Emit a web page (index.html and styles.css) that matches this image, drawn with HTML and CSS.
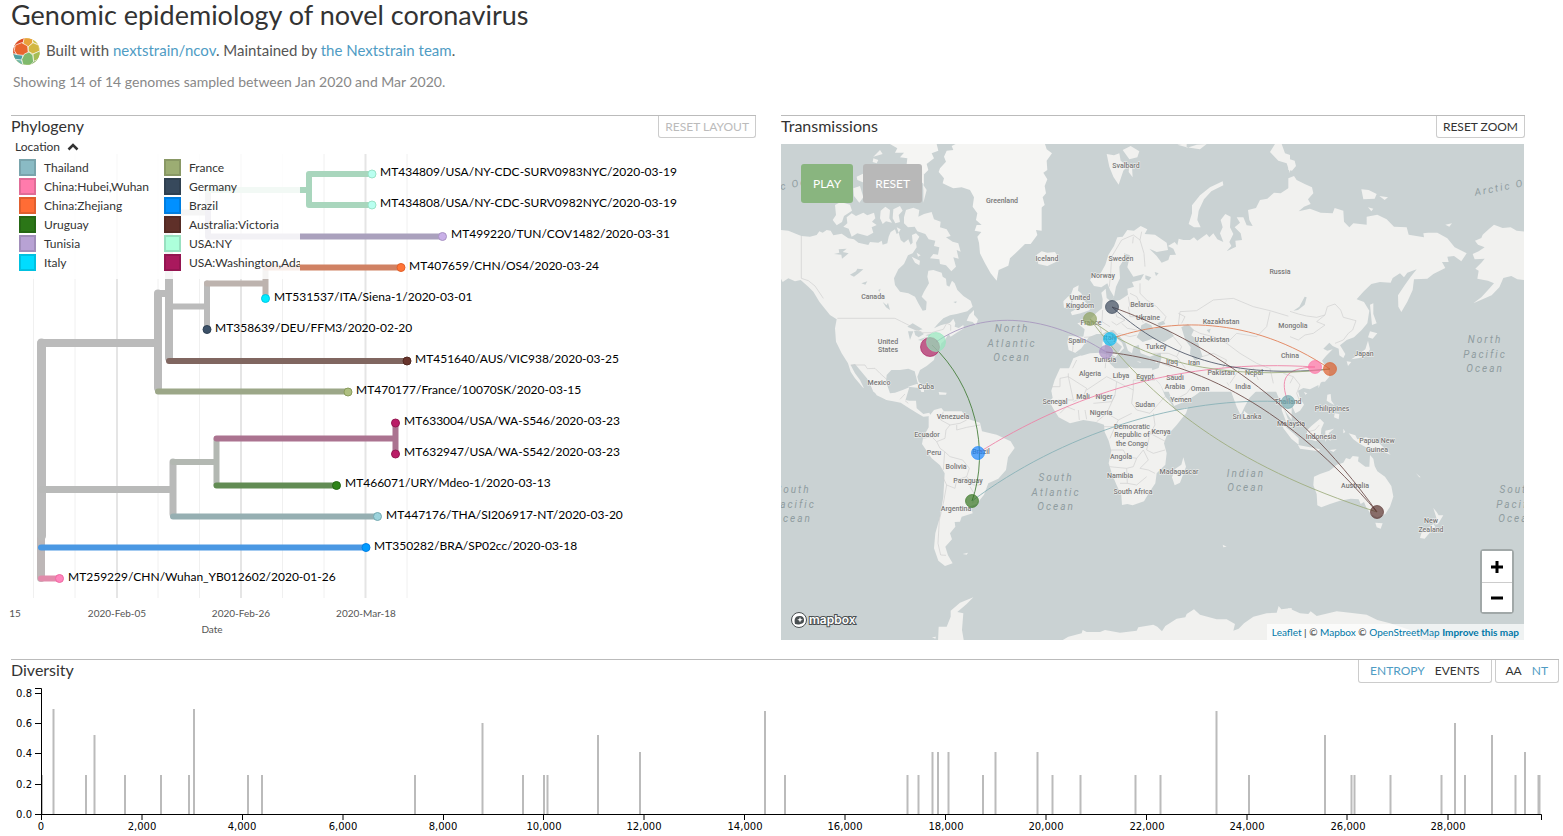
FILE: index.html
```html
<!DOCTYPE html>
<html lang="en">
<head>
<meta charset="utf-8">
<title>Genomic epidemiology of novel coronavirus</title>
<link rel="stylesheet" href="styles.css">
</head>
<body>
<header class="header">
  <h1 class="title">Genomic epidemiology of novel coronavirus</h1>
  <div class="byline">
    <svg class="logo" viewBox="0 0 81 81" aria-hidden="true">
      <clipPath id="disc"><circle cx="40.500" cy="40.500" r="40"/></clipPath>
      <g clip-path="url(#disc)" stroke="#fff" stroke-width="2">
        <rect width="81" height="81" fill="#d9c04a"/>
        <path fill="#e04a2a" d="M0 0h36l-6 14-14 8-16 6z"/>
        <path fill="#e8a23a" d="M34 -2h26l-2 18-14 12-14-12z"/>
        <path fill="#c8bd45" d="M58 0h24v22l-8-2-14-6z"/>
        <path fill="#e8662e" d="M6 22l20-8 18 10 2 20-14 10-20-2-10-14z"/>
        <path fill="#d2b742" d="M46 26l14-12 18 8 2 18-20 8-14-8z"/>
        <path fill="#df5335" d="M-2 28l8-4-2 14 6 10-14 2z"/>
        <path fill="#4f9fa3" d="M-2 46l14 4 18 2-4 16-16-2-12-4z"/>
        <path fill="#71b7a6" d="M8 64l18 2 4 16-24 2z"/>
        <path fill="#7fba6c" d="M34 48l14-6 12 10 2 22-14 10-18-4-4-16z"/>
        <path fill="#a5bd55" d="M60 48l18-8 6 6-4 20-18 6z"/>
        <path fill="#73a45a" d="M62 70l14-6v20H52z"/>
      </g>
    </svg>
    <span class="byline-text">Built with <a href="#ncov">nextstrain/ncov</a>. Maintained by <a href="#team">the Nextstrain team</a>.</span>
  </div>
  <p class="summary">Showing 14 of 14 genomes sampled between Jan 2020 and Mar 2020.</p>
</header>

<main>
  <div class="panels">
    <section class="panel">
      <div class="panel-head">
        <h2 class="panel-title">Phylogeny</h2>
        <button class="tab" type="button" disabled>RESET LAYOUT</button>
      </div>
      <div class="tree-wrap">
        <svg class="tree" viewBox="9 140 747 504" role="img" aria-label="Phylogenetic tree">
          <g class="grid-minor"><path d="M33.500 154V598M75 154V598M158 154V598M199.500 154V598M282.500 154V598M324 154V598M407 154V598"/></g>
          <g class="grid-major"><path d="M117 154V598M241 154V598M365.500 154V598"/></g>
          <g class="branches">
            <path stroke="#bdb7b7" stroke-width="8" d="M41 480V578"/>
            <path stroke="#bbb" stroke-width="9" d="M41.500 343V536"/>
            <path stroke="#bbb" stroke-width="8" d="M41.500 343H158"/>
            <path stroke="#bbb" stroke-width="8" d="M158 293.500V388"/>
            <path stroke="#bbb" stroke-width="7" d="M158 293.500H169"/>
            <path stroke="#bbb" stroke-width="8" d="M169 212V358"/>
            <path stroke="#bbb" stroke-width="6" d="M169 306.500H207V326M169 212.500H208V190"/>
            <path stroke="#bbb" stroke-width="6" d="M207 306.500V283.500"/>
            <path stroke="#bdb3ae" stroke-width="6" d="M207 283.500H265.500M265.500 267V295"/>
            <path stroke="#d08163" stroke-width="6" d="M265.500 267.500H401"/>
            <path stroke="#aaa1bd" stroke-width="6" d="M208 212V236.500H442"/>
            <path stroke="#a9d6bd" stroke-width="6" d="M208 190H309M309 174V205M309 174H372M309 205H372"/>
            <path stroke="#806660" stroke-width="6" d="M169 361H407"/>
            <path stroke="#9ca788" stroke-width="6" d="M158 391.500H348"/>
            <path stroke="#b9bab9" stroke-width="7" d="M41.500 489.500H173M173 462V514"/>
            <path stroke="#b3b8b2" stroke-width="6" d="M173 462H216.500M216.500 440V484"/>
            <path stroke="#ab7390" stroke-width="6" d="M216.500 438.500H395.500M395.500 423V454"/>
            <path stroke="#628c54" stroke-width="6" d="M216.500 485.500H336"/>
            <path stroke="#96afb2" stroke-width="6" d="M173 516.500H377"/>
            <path stroke="#4a98e3" stroke-width="6" d="M41 547.500H366"/>
            <path stroke="#e28bab" stroke-width="6" d="M41 578.500H59"/>
          </g>
          <g class="tips">
            <circle cx="372" cy="174" r="4" fill="#b9fff0" stroke="#9be3c8"/>
            <circle cx="372" cy="205" r="4" fill="#b9fff0" stroke="#9be3c8"/>
            <circle cx="442.500" cy="236.500" r="4" fill="#c9b0e8" stroke="#a994c4"/>
            <circle cx="401" cy="267.500" r="4" fill="#ff7436" stroke="#e2602a"/>
            <circle cx="265.500" cy="298.500" r="4" fill="#00edff" stroke="#00c5e6"/>
            <circle cx="207" cy="329.500" r="4" fill="#3c5168" stroke="#2f4154"/>
            <circle cx="407" cy="361" r="4" fill="#69352d" stroke="#522821"/>
            <circle cx="348" cy="392" r="4" fill="#aebf80" stroke="#8a9c5d"/>
            <circle cx="395.500" cy="423" r="4" fill="#bb1c67" stroke="#951852"/>
            <circle cx="395.500" cy="454" r="4" fill="#bb1c67" stroke="#951852"/>
            <circle cx="336.500" cy="485.500" r="4" fill="#2f8419" stroke="#246713"/>
            <circle cx="377.500" cy="516.500" r="4" fill="#9cd3dc" stroke="#74a9b1"/>
            <circle cx="366" cy="547.500" r="4" fill="#009bff" stroke="#0080e6"/>
            <circle cx="59.500" cy="578.500" r="4" fill="#ff85bd" stroke="#f069a2"/>
          </g>
          <g class="tip-label">
            <text x="380" y="176">MT434809/USA/NY-CDC-SURV0983NYC/2020-03-19</text>
            <text x="380" y="207">MT434808/USA/NY-CDC-SURV0982NYC/2020-03-19</text>
            <text x="451" y="238">MT499220/TUN/COV1482/2020-03-31</text>
            <text x="409" y="270">MT407659/CHN/OS4/2020-03-24</text>
            <text x="274" y="301">MT531537/ITA/Siena-1/2020-03-01</text>
            <text x="215" y="332">MT358639/DEU/FFM3/2020-02-20</text>
            <text x="415" y="363">MT451640/AUS/VIC938/2020-03-25</text>
            <text x="356" y="394">MT470177/France/10070SK/2020-03-15</text>
            <text x="404" y="425">MT633004/USA/WA-S546/2020-03-23</text>
            <text x="404" y="456">MT632947/USA/WA-S542/2020-03-23</text>
            <text x="345" y="487">MT466071/URY/Mdeo-1/2020-03-13</text>
            <text x="386" y="519">MT447176/THA/SI206917-NT/2020-03-20</text>
            <text x="374" y="550">MT350282/BRA/SP02cc/2020-03-18</text>
            <text x="68" y="581">MT259229/CHN/Wuhan_YB012602/2020-01-26</text>
          </g>
          <g class="date-label">
            <text x="15" y="617">15</text><text x="117" y="617">2020-Feb-05</text>
            <text x="241" y="617">2020-Feb-26</text><text x="366" y="617">2020-Mar-18</text>
            <text x="212" y="633">Date</text>
          </g>
        </svg>
        <div class="legend">
          <button class="legend-toggle" type="button">Location
            <svg class="chevron" viewBox="0 0 12 8" aria-hidden="true"><path d="M1.500 6.500L6 2l4.500 4.500" fill="none" stroke="#333" stroke-width="2.500"/></svg>
          </button>
          <ul class="legend-list">
            <li><i class="sw thailand"></i>Thailand</li>
            <li><i class="sw hubei"></i>China:Hubei,Wuhan</li>
            <li><i class="sw zhejiang"></i>China:Zhejiang</li>
            <li><i class="sw uruguay"></i>Uruguay</li>
            <li><i class="sw tunisia"></i>Tunisia</li>
            <li><i class="sw italy"></i>Italy</li>
            <li><i class="sw france"></i>France</li>
            <li><i class="sw germany"></i>Germany</li>
            <li><i class="sw brazil"></i>Brazil</li>
            <li><i class="sw victoria"></i>Australia:Victoria</li>
            <li><i class="sw ny"></i>USA:NY</li>
            <li><i class="sw washington"></i>USA:Washington,Ada</li>
          </ul>
        </div>
      </div>
    </section>

    <section class="panel">
      <div class="panel-head">
        <h2 class="panel-title">Transmissions</h2>
        <button class="tab" type="button">RESET ZOOM</button>
      </div>
      <div class="map-wrap">
        <svg class="map" viewBox="781 144 743 496" role="img" aria-label="World map of transmissions">
          <rect x="781" y="144" width="743" height="496" fill="#cad2d3"/>
          <!-- North America, Greenland -->
          <g transform="translate(780 110) scale(.33333)">
            <path class="land" d="M0 360L25 362 64 378 90 380 110 375 118 364 128 368 140 360 152 362 160 376 185 371 205 385 222 388 235 398 265 405 270 396 295 398 305 392 308 404 322 400 326 380 332 366 345 358 350 372 356 368 362 390 372 398 385 388 392 404 398 398 396 375 408 370 418 380 408 398 410 412 398 430 384 436 372 462 355 478 342 505 345 525 360 545 385 550 405 560 415 580 428 602 438 600 440 575 425 560 432 545 447 520 442 500 445 482 460 480 485 488 488 500 498 506 500 526 508 530 516 512 524 520 532 540 550 558 572 572 578 590 562 604 530 612 510 616 490 625 475 640 462 655 482 646 510 638 520 626 526 640 524 650 536 654 550 645 552 655 530 668 512 680 505 672 495 690 484 700 478 720 465 735 462 750 440 768 420 780 412 800 416 815 432 830 432 846 424 846 412 815 404 784 385 776 360 780 334 780 320 795 318 815 330 850 345 848 368 840 388 832 375 875 362 872 320 870 280 845 265 810 240 780 225 762 212 765 225 790 240 810 252 835 248 832 225 805 212 785 204 760 185 730 168 695 165 655 170 628 150 615 130 590 118 575 100 545 85 530 62 510 45 514 25 505 8 516 0 500z"/>
            <path class="ice" d="M527 102L515 108 520 120 500 122 492 140 498 155 480 175 476 186 492 205 488 220 505 228 520 235 545 232 570 240 582 262 578 290 592 310 588 330 605 345 590 345 584 362 604 366 592 380 597 398 600 430 615 460 632 490 650 512 656 480 685 467 690 445 708 428 735 402 752 402 772 375 768 360 785 362 785 102z"/>
            <path class="ice" d="M330 102L352 115 345 128 372 128 360 142 382 145 380 162 395 180 408 205 432 222 430 195 445 180 440 162 462 145 455 130 475 122 470 102z"/>
            <path class="land" d="M372 322L378 300 400 293 418 300 415 320 432 312 455 306 462 328 482 335 480 352 500 358 512 378 498 382 518 395 535 400 542 425 530 420 536 446 520 442 528 470 514 484 498 466 480 462 478 448 450 445 460 432 474 434 478 412 462 408 466 392 446 388 436 372 412 364 404 350 384 352 372 340z"/>
            <path class="land" d="M200 322L215 310 228 318 250 308 262 316 282 308 286 325 276 335 290 345 275 352 280 368 262 378 232 370 215 380 206 356 190 350 202 340zM165 285L182 276 210 284 216 302 192 318 186 336 170 346 158 330 168 315zM302 302L316 290 330 300 328 325 336 338 318 334 308 342 300 325zM340 298L360 288 368 302 356 315 360 336 346 340 338 325zM220 235L240 228 250 262 238 278 222 258zM230 200L252 190 252 218 232 210zM430 225L440 240 430 278zM280 145L295 150 290 160 278 156zM395 440L420 452 418 466 405 458zM410 428L422 436 414 440zM560 632L568 614 582 600 582 614 594 628 588 646 578 636zM425 172L432 196 430 240zM350 352L362 358 356 368zM280 140L300 120 308 132zM342 500L348 498z"/>
            <path class="water" d="M162 432L178 428 176 418 200 416 188 426 206 430 186 446 184 434zM210 494L228 484 232 476 250 478 236 490 222 500zM244 520L262 514 256 524zM308 576L320 586 324 578 330 600 318 592zM295 540L302 536 298 546zM382 650L398 640 428 658 410 662zM384 664L400 664 390 690zM402 662L420 664 432 672 416 682 406 676zM414 690L440 680 424 692zM436 676L456 670 448 678zM520 576L530 574 528 580z"/>
            <path class="border" d="M64 378V505L85 512 105 528 130 565M172 625H345L365 635 385 645 428 668 455 668 468 664 490 658 500 640 512 645 512 662M212 765L255 765 262 776 285 775 300 790 320 808"/>
          </g>
          <!-- Europe, North Africa, western Asia -->
          <g transform="translate(1040 140) scale(.33333)">
            <path class="ice" d="M-5 12H15L20 28 36 40 20 62 22 90 10 98 22 118 14 138 18 160 8 172 14 195 -5 210z"/>
            <path class="land" d="M35 755L60 700 85 690 100 655 125 645 105 638 86 630 82 608 86 588 130 590 134 568 112 550 148 540 168 520 186 505 188 478 184 458 197 446 200 474 212 484 222 470 210 450 202 430 184 442 162 438 150 420 158 408 182 400 196 374 205 345 222 318 232 292 248 290 262 270 282 272 302 258 322 268 314 282 345 284 380 308 384 330 350 336 328 326 350 348 365 368 385 360 390 345 408 344 400 326 384 318 404 306 412 316 416 296 430 300 450 300 462 292 472 302 500 282 508 292 520 280 532 298 550 306 540 280 548 262 542 240 556 222 572 230 570 262 580 282 568 306 574 318 560 334 588 320 586 302 606 300 602 280 584 262 600 248 590 232 610 232 620 256 638 258 628 240 624 210 648 204 660 180 682 176 702 158 722 160 755 138V755z"/>
            <path class="land" d="M92 516L108 508 92 500 98 484 92 466 100 444 116 436 114 452 124 460 130 480 146 496 150 510 122 520 96 526zM72 504L70 484 86 468 94 482 88 500zM-10 344L5 334 22 338 45 336 56 352 48 366 22 378 -5 372zM200 42L222 46 238 40 242 62 262 78 250 92 236 134 220 110 208 80zM248 30L272 18 298 34 292 52 268 58zM268 76L276 80 278 112 266 96zM446 252L456 220 456 196 480 166 510 142 548 124 550 136 514 154 492 178 476 212 472 240 482 262 462 262zM690 36L705 12H725L735 40 750 45V100L740 70 715 62zM412 14L440 10 440 24 470 14 500 12 480 28 440 22z"/>
            <path class="water" d="M208 486L222 470 228 440 240 415 238 380 252 358 252 340 270 346 262 382 280 410 312 402 302 420 276 426 282 440 262 446 264 464 240 480zM316 406L334 412 326 422 316 416zM344 396L356 400 348 408zM106 638L124 625 136 608 146 592 170 582 188 582 200 574 212 582 226 602 246 620 232 644 252 625 246 608 222 588 208 572 220 570 238 588 256 608 264 632 276 640 280 622 296 614 302 640 330 650 362 638 364 655 356 684 332 692 300 694 268 678 254 696 226 686 208 668 206 644 180 638 150 640 125 647zM290 592L300 572 304 556 318 548 334 556 340 568 358 560 385 568 402 588 372 606 338 596 308 606zM352 550L370 542 376 552 358 558zM424 562L444 552 462 570 454 586 472 600 480 626 488 650 466 662 450 642 452 622 436 600zM340 700L346 716 360 732 372 755 360 755 344 724zM430 692L446 700 462 718 482 728 492 720 486 742 460 732 440 714zM500 570L512 566 508 580z"/>
            <path class="land" d="M188 604L196 606 194 628 186 628zM212 642L234 640 228 652zM290 664L304 666 300 668zM344 666L356 662 350 670z"/>
            <path class="border" d="M208 440L212 400 215 350 245 300 280 285 300 300 305 275M300 300L312 340 315 380M280 290L278 310M270 460L290 470 300 490 270 500 265 470M300 430L300 460 320 480 350 500 378 530 372 545M265 500L270 530 300 530 310 548M415 555L420 515 470 512 520 480 580 475 640 500 690 512 750 530M415 520L435 530 425 550M430 555L480 580 520 590 560 610 590 580 650 590 680 560 690 515M486 650L520 640 560 660 540 700 570 740M560 610L600 640 650 670 700 690 750 700M400 590L425 620 410 650 385 640 340 640M410 650L440 690M150 540L180 560 185 580M188 510L186 545 210 560M86 598L100 600 98 635M132 592L160 590M60 700L85 720 85 750M110 660L95 690M200 640L195 690 215 745M265 680V750M340 700L330 750M365 670L390 680 430 720M225 500L230 530 255 540 230 555 215 545M245 550L262 565 290 570M235 580L270 590 290 585"/>
          </g>
          <!-- East Asia, Alaska -->
          <g transform="translate(1290 110) scale(.33333)">
            <path class="land" d="M-5 205L12 198 20 210 44 222 66 232 70 250 54 268 62 282 42 290 26 304 60 296 92 308 128 310 134 294 160 302 162 335 178 352 190 340 230 344 230 320 262 314 290 328 312 350 350 352 356 374 402 382 400 370 414 368 442 368 472 385 494 412 530 430 514 454 492 438 472 440 476 456 456 456 466 474 430 492 412 506 372 508 368 540 352 575 334 606 325 590 324 556 345 524 362 500 380 478 352 488 342 502 330 490 308 504 302 518 270 516 244 522 220 545 200 568 222 576 238 602 232 640 215 660 192 682 170 690 150 706 166 732 160 744 148 736 146 716 128 708 118 698 100 716 112 722 128 718 108 738 96 752 112 774 118 800 105 815H-5zM-5 146L14 152 18 168 6 182 -5 180zM214 238L236 240 260 252 254 266 220 268zM268 258L294 262 284 270zM466 344L486 340 478 350zM234 292L250 296 244 304zM240 584L250 580 250 612 260 640 246 645zM240 664L262 670 248 686 234 682zM234 692L240 718 228 738 208 744 184 748 204 734 226 718zM170 754L184 756 174 768z"/>
            <path class="land" d="M705 365L680 362 662 352 638 354 612 344 596 358 578 374 574 384 555 392 564 404 584 412 566 424 548 432 554 448 584 446 574 458 556 476 566 482 562 506 594 512 612 520 594 540 574 562 550 580 605 556 628 532 640 504 664 498 682 508 705 510z"/>
            <path class="water" d="M10 602L28 590 44 560 50 562 44 584 24 600z"/>
            <path class="border" d="M0 604L25 612 50 618 80 622 105 615 112 590 135 582 152 600 160 622 198 632 188 660 175 670 160 690 135 700M105 615L80 635 105 645 70 670 45 675 25 690 0 680"/>
          </g>
          <!-- Latin America, Antarctic Peninsula -->
          <g transform="translate(780 370) scale(.33333)">
            <path class="land" d="M280 60L320 82 365 88 388 92 408 92 410 115 430 132 448 128 452 138 430 140 412 130 390 116 362 98 320 90 290 76zM446 140L462 120 484 114 492 124 545 124 566 148 600 158 606 184 650 194 692 214 704 234 684 262 678 300 655 326 625 340 612 374 590 402 572 408 578 430 545 440 540 455 524 456 526 470 510 490 516 508 496 530 504 556 518 580 495 588 475 572 462 535 466 490 480 440 490 380 494 310 480 286 455 265 426 222 430 200 446 172zM384 50L410 42 440 50 466 58 438 56zM476 66L500 68 498 74 478 74zM548 552L564 548 560 554zM474 815L476 770 500 770 512 740 512 722 540 698 580 682 560 702 532 726 550 730 546 780 552 815zM456 802L468 800 466 806z"/>
            <path class="border" d="M490 125L482 150 510 165 498 180 495 205 470 215 480 235 494 245M510 165L540 160 560 150M530 165L530 180 560 172 600 165M430 205L455 200 470 215M494 245L510 260 548 270 568 295 560 320 580 345 600 345M494 245L490 300M560 320L530 330 525 355 500 345M570 350L585 375 578 400M488 320L500 345 490 400 478 450 474 520 482 555 498 556M360 88L375 72M375 92L385 100"/>
          </g>
          <!-- Africa, India, Antarctica -->
          <g transform="translate(1040 370) scale(.33333)">
            <path class="land" d="M60 -5L44 30 34 62 38 84 28 94 40 116 56 142 90 160 130 150 168 156 192 164 194 186 206 212 214 242 206 280 216 312 230 346 244 376 246 405 262 402 278 406 312 394 330 364 346 340 350 310 376 284 380 250 372 220 380 198 410 165 438 130 444 112 406 122 392 98 376 80 362 46 340 20 336 -5zM356 -5L376 38 392 80 402 108 440 92 468 74 508 44 494 28 470 30 440 -5zM455 -5L470 16 515 24 550 42 564 36 576 72 590 110 602 136 614 110 628 84 662 50 678 36 700 42 712 74 724 100 740 130 755 150V-5zM612 122L626 134 618 146 610 140zM430 262L438 290 420 338 404 346 396 322 406 296 424 284zM716 155L755 188V200zM548 524L560 530 550 532zM60 815L85 800 125 790 128 780 140 786 180 786 195 780 240 788 290 782 295 772 340 764 352 770 366 784 376 768 410 746 436 742 440 732 462 718 480 734 530 748 560 748 585 762 580 782 596 776 612 760 640 740 680 730 710 728 716 708 724 718 755 714V815z"/>
            <path class="border" d="M35 50H60V25L85 20V10M85 20L100 90 55 90M85 20L140 55 130 80 100 95M200 20L140 60M200 20L230 35 225 75 215 95 160 100M230 35L280 60V30H345M280 60L275 100 290 120 330 130 375 80M170 155L200 130 225 75M200 130L235 150 275 130M60 130L80 110 105 120M115 120L118 150M135 120L140 148M192 170L225 170 235 150M225 170L210 205M210 240H250L260 260 290 265 280 290 260 295 208 290M340 130L345 165 330 190 378 215M330 190L320 240 340 250 375 240M290 265L310 240 325 270 300 295 325 300 345 310M260 295L262 340 240 340M262 340L290 345 320 320M310 360L305 375M395 95L440 70 455 50M570 40L600 -5M640 -5L655 30M690 -5L700 40"/>
          </g>
          <!-- Southeast Asia, Australia -->
          <g transform="translate(1290 370) scale(.33333)">
            <path class="land" d="M-25 -5H115L118 10 104 28 84 46 60 58 40 54 24 62 30 84 42 104 30 122 16 130 8 112 -8 96 -20 110 -5 150 6 172 -8 165 -25 120zM84 34L92 38 86 54zM42 66L52 70 46 74zM112 74L122 72 124 92 134 106 120 98 110 92zM134 130L148 132 146 148 132 142zM52 180L64 168 90 146 102 158 94 176 92 200 78 214 58 208 50 196zM-20 165L10 190 26 205 26 224 4 206 -20 175zM24 225L60 232 90 238 86 244 30 236zM106 182L132 176 116 190 122 214 112 204 106 216zM160 176L166 186 160 190zM176 190L196 196 202 208 228 202 262 214 286 238 302 254 276 244 248 248 236 236 206 220 190 208zM72 320L90 312 118 302 132 292 140 284 160 278 168 264 180 268 188 258 206 260 204 274 226 290 238 290 240 255 250 266 254 288 262 304 285 320 304 348 310 380 300 410 286 432 262 442 242 432 228 410 222 396 212 402 206 388 182 386 150 392 120 402 94 412 82 406 80 372 70 346zM256 458L278 460 272 476 260 472zM430 414L440 426 446 436 460 436 444 462 436 464 440 446zM430 462L436 470 418 490 404 506 390 504 394 490zM378 310L392 322 388 322zM118 240L140 238 130 246zM-5 714L30 730 55 732 62 724 80 738 140 724 180 728 230 734 262 750 300 760 360 780 405 815H-5z"/>
            <path class="border" d="M-20 10L10 20 30 45 20 70 30 95M10 20L0 40M55 185L75 180 88 165"/>
          </g>

          <g class="ocean-label">
            <text x="1012" y="332">North</text><text x="1012" y="347">Atlantic</text><text x="1012" y="361">Ocean</text>
            <text x="1056" y="481">South</text><text x="1056" y="496">Atlantic</text><text x="1056" y="510">Ocean</text>
            <text x="1246" y="477">Indian</text><text x="1246" y="491">Ocean</text>
            <text x="1485" y="343">North</text><text x="1485" y="358">Pacific</text><text x="1485" y="372">Ocean</text>
            <text x="1517" y="493">South</text><text x="1518" y="508">Pacific</text><text x="1517" y="522">Ocean</text>
            <text x="793" y="493">South</text><text x="794" y="508">Pacific</text><text x="793" y="522">Ocean</text>
            <text x="1515" y="196" transform="rotate(-11 1474 196)">Arctic Ocean</text>
            <text x="791" y="196" transform="rotate(-11 750 196)">Arctic Ocean</text>
          </g>
          <g class="place">
            <text x="1126" y="168">Svalbard</text><text x="1002" y="203">Greenland</text><text x="1047" y="261">Iceland</text>
            <text x="1121" y="261">Sweden</text><text x="1103" y="278">Norway</text><text x="1080" y="300">United</text>
            <text x="1080" y="308">Kingdom</text><text x="1142" y="307">Belarus</text><text x="1148" y="320">Ukraine</text>
            <text x="1091" y="325">France</text><text x="1110" y="340">Italy</text><text x="1077" y="343">Spain</text>
            <text x="1105" y="362">Tunisia</text><text x="1156" y="349">Turkey</text><text x="1172" y="364">Iraq</text>
            <text x="1194" y="365">Iran</text><text x="1221" y="324">Kazakhstan</text><text x="1212" y="342">Uzbekistan</text>
            <text x="1293" y="328">Mongolia</text><text x="1290" y="358">China</text><text x="1364" y="356">Japan</text>
            <text x="1280" y="274">Russia</text><text x="873" y="299">Canada</text><text x="888" y="344">United</text>
            <text x="888" y="352">States</text><text x="879" y="385">Mexico</text><text x="926" y="389">Cuba</text>
            <text x="1090" y="376">Algeria</text><text x="1121" y="378">Libya</text><text x="1145" y="379">Egypt</text>
            <text x="1175" y="380">Saudi</text><text x="1175" y="389">Arabia</text><text x="1200" y="391">Oman</text>
            <text x="1221" y="375">Pakistan</text><text x="1254" y="375">Nepal</text><text x="1243" y="389">India</text>
            <text x="1181" y="402">Yemen</text><text x="1055" y="404">Senegal</text><text x="1083" y="399">Mali</text>
            <text x="1104" y="399">Niger</text><text x="1101" y="415">Nigeria</text><text x="1145" y="407">Sudan</text>
            <text x="1161" y="434">Kenya</text><text x="1132" y="429">Democratic</text><text x="1132" y="437">Republic of</text>
            <text x="1132" y="446">the Congo</text><text x="1121" y="459">Angola</text><text x="1120" y="478">Namibia</text>
            <text x="1133" y="494">South Africa</text><text x="1179" y="474">Madagascar</text><text x="1247" y="419">Sri Lanka</text>
            <text x="1288" y="404">Thailand</text><text x="1291" y="426">Malaysia</text><text x="1332" y="411">Philippines</text>
            <text x="1321" y="439">Indonesia</text><text x="1377" y="443">Papua New</text><text x="1377" y="452">Guinea</text>
            <text x="1355" y="488">Australia</text><text x="1431" y="523">New</text><text x="1431" y="532">Zealand</text>
            <text x="953" y="419">Venezuela</text><text x="927" y="437">Ecuador</text><text x="934" y="455">Peru</text>
            <text x="981" y="454">Brazil</text><text x="956" y="469">Bolivia</text><text x="968" y="483">Paraguay</text><text x="956" y="511">Argentina</text>
          </g>
          <g class="arcs">
            <path stroke="#a695bd" d="M936 342C985 308 1050 316 1106 352"/>
            <path stroke="#3f7a34" d="M932 345C975 385 990 450 972 501"/>
            <path stroke="#ee7fa5" d="M978 453C1070 395 1180 358 1315 367M1315 367C1283 368 1280 380 1288 402"/>
            <path stroke="#86b0b6" d="M972 501C1060 435 1180 395 1288 402"/>
            <path stroke="#e07a50" d="M1110 339C1170 318 1250 315 1330 369"/>
            <path stroke="#4c5566" d="M1112 307C1160 350 1220 380 1330 369"/>
            <path stroke="#6b4a46" d="M1112 307C1190 335 1290 390 1377 512M1106 352C1200 362 1290 410 1377 512"/>
            <path stroke="#9cab7b" d="M1090 319C1140 360 1220 382 1330 369M1090 319C1150 400 1230 465 1377 512"/>
          </g>
          <g class="pins">
            <circle cx="930" cy="347" r="9.500" fill="#a8185c" stroke="#a8185c"/>
            <circle cx="936" cy="342" r="9.500" fill="#94e8bd" stroke="#94e8bd"/>
            <circle cx="978" cy="453" r="6.500" fill="#1483ff" stroke="#1483ff"/>
            <circle cx="972" cy="501" r="6.500" fill="#2f701b" stroke="#2f701b"/>
            <circle cx="1112" cy="307" r="6.500" fill="#37465a" stroke="#2e3c50"/>
            <circle cx="1090" cy="319" r="6.500" fill="#8ea05f" stroke="#8ea05f"/>
            <circle cx="1110" cy="339" r="6.500" fill="#0bbcf5" stroke="#0bbcf5"/>
            <circle cx="1106" cy="352" r="6.500" fill="#a78cc4" stroke="#a78cc4"/>
            <circle cx="1315" cy="367" r="6.500" fill="#ff6da2" stroke="#ff6da2"/>
            <circle cx="1330" cy="369" r="6.500" fill="#dc5a26" stroke="#dc5a26"/>
            <circle cx="1288" cy="402" r="6.500" fill="#6fa6ae" stroke="#6fa6ae"/>
            <circle cx="1377" cy="512" r="6.500" fill="#552d2a" stroke="#552d2a"/>
          </g>
          <g class="mapbox">
            <circle cx="799" cy="620" r="7.500" fill="#fff" stroke="#4a5052" stroke-width="1"/>
            <path d="M795 624c-1-5 0-8 4.500-8a4 4 0 0 1 1 8c-2 .8-4 .5-5.500 0z" fill="#4a5052"/>
            <path d="M800 617l.8 2 2 .8-2 .8-.8 2-.8-2-2-.8 2-.8z" fill="#fff"/>
            <text x="809" y="624">mapbox</text>
          </g>
        </svg>
        <div class="map-actions">
          <button class="action play" type="button">PLAY</button>
          <button class="action reset" type="button">RESET</button>
        </div>
        <div class="zoom">
          <button type="button" aria-label="Zoom in"><svg viewBox="0 0 12 12" aria-hidden="true"><path d="M6 0V12M0 6H12"/></svg></button>
          <button type="button" aria-label="Zoom out"><svg viewBox="0 0 12 12" aria-hidden="true"><path d="M0 6H12"/></svg></button>
        </div>
        <div class="attribution"><a href="#leaflet">Leaflet</a> | © <a href="#mapbox">Mapbox</a> © <a href="#osm">OpenStreetMap</a> <a class="strong" href="#improve">Improve this map</a></div>
      </div>
    </section>
  </div>

  <section class="diversity">
    <div class="panel-head">
      <h2 class="panel-title">Diversity</h2>
      <div class="toggles">
        <div class="toggle-group"><button type="button" class="on">ENTROPY</button><button type="button">EVENTS</button></div>
        <div class="toggle-group narrow"><button type="button">AA</button><button type="button" class="on">NT</button></div>
      </div>
    </div>
    <svg class="chart" viewBox="11 684 1548 150" role="img" aria-label="Genome diversity">
      <path class="bars" d="M42 814V775M53.500 814V709M86 814V775M94.500 814V735M125 814V775M161 814V775M189 814V775M194 814V709M248 814V775M262 814V775M415 814V775M482.500 814V723M523 814V775M544 814V775M547.500 814V775M598 814V735M640 814V752M765 814V711M785 814V775M907.500 814V775M918.500 814V775M932.500 814V752M938 814V752M948.500 814V752M983 814V775M995.500 814V752M1037.500 814V752M1052.500 814V775M1080.500 814V775M1135.500 814V775M1160.500 814V775M1216.500 814V711M1249 814V775M1325 814V735M1351.500 814V775M1354.500 814V775M1390.500 814V775M1441.500 814V775M1455 814V723M1465 814V775M1492 814V735M1515.500 814V775M1525 814V752M1538.500 814V775M1539.500 814V775"/>
      <path class="axis" d="M35 688.500H41.500V814.500M35 693.500H41M35 723.500H41M35 753.500H41M35 784.500H41M35 814.500H1541.500V820M41.500 814V820M142 814V820M242.500 814V820M343 814V820M443.500 814V820M543.500 814V820M644 814V820M744.500 814V820M845 814V820M945.500 814V820M1046 814V820M1146.500 814V820M1247 814V820M1347 814V820M1448 814V820"/>
      <g class="y-label"><text x="32" y="697">0.8</text><text x="32" y="727">0.6</text><text x="32" y="757">0.4</text><text x="32" y="788">0.2</text><text x="32" y="818">0.0</text></g>
      <g class="x-label"><text x="41" y="830">0</text><text x="142" y="830">2,000</text><text x="242" y="830">4,000</text><text x="343" y="830">6,000</text><text x="443" y="830">8,000</text><text x="544" y="830">10,000</text><text x="644" y="830">12,000</text><text x="745" y="830">14,000</text><text x="845" y="830">16,000</text><text x="946" y="830">18,000</text><text x="1046" y="830">20,000</text><text x="1147" y="830">22,000</text><text x="1247" y="830">24,000</text><text x="1348" y="830">26,000</text><text x="1448" y="830">28,000</text></g>
    </svg>
  </section>
</main>
</body>
</html>
```
FILE: styles.css
```css
* { box-sizing: border-box; }
body {
  margin: 0;
  padding: 0 4px 0 11px;
  background: #fff;
  color: #333;
  font-family: Lato, "Open Sans", sans-serif;
  overflow-x: hidden;
}
a { color: #4f9cc4; text-decoration: none; }
button { font-family: inherit; color: inherit; cursor: pointer; }
svg { display: block; }

.header { height: 115px; }
.title { margin: 0; font-size: 27px; line-height: 30px; font-weight: 400; }
.byline { display: flex; align-items: center; gap: 6px; height: 28px; margin: 7px 0 0 2px; font-size: 15px; color: #555; }
.byline-text { padding-bottom: 2px; }
.logo { width: 27px; height: 27px; }
.summary { margin: 7px 0 0 2px; font-size: 14px; line-height: 20px; color: #888; }

.panels { display: grid; grid-template-columns: 745fr 744fr; gap: 25px; padding-right: 34px; }
.panel { min-width: 0; }
.panel-head { display: flex; justify-content: space-between; align-items: flex-start; height: 25px; border-top: 1px solid #bbb; }
.panel-title { margin: 0; font-size: 16px; line-height: 20px; font-weight: 400; }
.tab {
  height: 22px;
  padding: 0 6px;
  border: 1px solid #ccc;
  border-top: 0;
  border-radius: 0 0 3px 3px;
  background: #fff;
  font-size: 12px;
  line-height: 20px;
}
.tab:disabled { color: #bbb; cursor: default; }

.tree-wrap { position: relative; margin-left: -2px; }
.tree { width: 100%; height: auto; }
.grid-minor { stroke: #f0f0f0; stroke-width: 1; }
.grid-major { stroke: #e5e5e5; stroke-width: 2; }
.branches { fill: none; stroke-linecap: round; stroke-linejoin: round; }
.tip-label { font-size: 12px; fill: #000; }
.date-label { font-size: 10px; fill: #555; text-anchor: middle; }

.legend { position: absolute; left: 0; top: 0; width: 291px; overflow: hidden; }
.legend-toggle { display: flex; align-items: center; gap: 7px; height: 14px; margin: 0 0 0 6px; padding: 0; border: 0; background: none; font-size: 12px; line-height: 14px; }
.chevron { width: 12px; height: 8px; }
.legend-list {
  display: grid;
  grid-auto-flow: column;
  grid-template-rows: repeat(6, 17px);
  grid-auto-columns: 145px;
  row-gap: 2px;
  margin: 0;
  padding: 5px 0 8px 10px;
  list-style: none;
  background: rgba(255, 255, 255, .85);
  font-size: 12px;
}
.legend-list li { display: flex; align-items: center; gap: 8px; line-height: 17px; white-space: nowrap; }
.sw { flex: none; width: 17px; height: 17px; border: 2px solid rgba(0, 0, 0, .12); background-clip: border-box; }
.thailand { background-color: #8abbc4; }
.hubei { background-color: #ff7bac; }
.zhejiang { background-color: #ff6c35; }
.uruguay { background-color: #2b7617; }
.tunisia { background-color: #b8a2d4; }
.italy { background-color: #00dcff; }
.france { background-color: #9cad73; }
.germany { background-color: #37495c; }
.brazil { background-color: #0090ff; }
.victoria { background-color: #5f3029; }
.ny { background-color: #adffdb; }
.washington { background-color: #a9195d; }

.map-wrap { position: relative; margin: 4px 1px 0 0; }
.map { width: 100%; height: auto; }
.land { fill: #f1f1ef; }
.ice { fill: #f5f5f3; }
.water { fill: #cad2d3; }
.border { fill: none; stroke: #cfcfcf; stroke-width: 2; stroke-linejoin: round; }
.place { font: 500 7px Roboto, sans-serif; fill: #777; text-anchor: middle; stroke: #f3f3f1; stroke-width: 1px; paint-order: stroke; }
.ocean-label { font: italic 10px Roboto, sans-serif; letter-spacing: 2px; fill: #8f9c9f; text-anchor: middle; }
.arcs { fill: none; stroke-width: 1; stroke-opacity: .85; }
.pins { fill-opacity: .68; stroke-opacity: .6; }
.mapbox text { font: 600 12px Inter, sans-serif; fill: #fff; stroke: #4a5052; stroke-width: 2px; paint-order: stroke; }
.map-actions { position: absolute; left: 20px; top: 20px; display: flex; gap: 10px; }
.action { height: 39px; padding: 0 12px; border: 0; border-radius: 3px; color: #fff; font-size: 12px; }
.play { background: #89b57f; }
.reset { background: #b8b8b8; }
.zoom { position: absolute; right: 10px; bottom: 26px; border: 2px solid rgba(0, 0, 0, .2); border-radius: 4px; background-clip: padding-box; }
.zoom button { display: flex; align-items: center; justify-content: center; width: 30px; height: 31px; padding: 0; border: 0; background: #fff; }
.zoom button + button { height: 30px; border-top: 1px solid #ccc; }
.zoom svg { width: 12px; height: 12px; fill: none; stroke: #000; stroke-width: 3; }
.attribution { position: absolute; right: 0; bottom: 0; padding: 0 5px; background: rgba(255, 255, 255, .7); font-size: 10px; line-height: 16px; white-space: nowrap; }
.attribution a { color: #0078a8; }
.strong { font-weight: 700; }

.diversity { margin-top: 15px; }
.toggles { display: flex; gap: 3px; }
.toggle-group { display: flex; gap: 10px; height: 23px; padding: 0 11px; border: 1px solid #ccc; border-top: 0; border-radius: 0 0 3px 3px; }
.toggle-group.narrow { padding: 0 10px; }
.toggle-group button { padding: 0; border: 0; background: none; font-size: 12px; line-height: 20px; }
.toggle-group .on { color: #4f9cc4; }
.chart { width: 100%; height: auto; font: 10px "DejaVu Sans", sans-serif; }
.bars { fill: none; stroke: #bbb; stroke-width: 2; }
.axis { fill: none; stroke: #000; stroke-width: 1; }
.y-label { text-anchor: end; }
.x-label { text-anchor: middle; }
```
